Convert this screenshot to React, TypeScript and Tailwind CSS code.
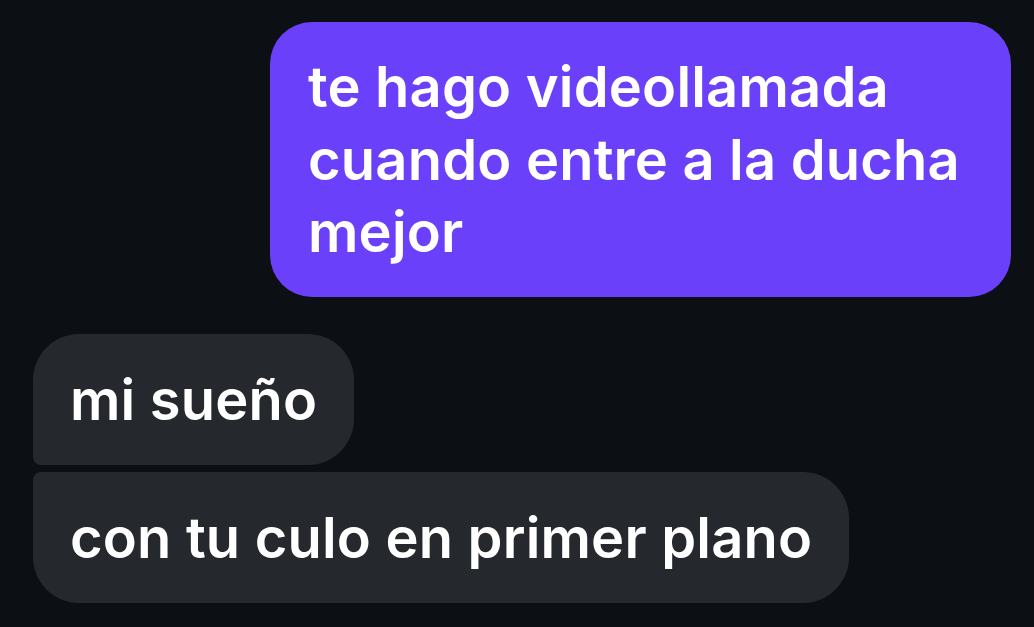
export default function App() {
  return (
    <div
      className="w-[1034px] h-[627px] bg-[#0c1014] overflow-hidden flex flex-col pt-[22px]"
      style={{ fontFamily: "Inter, 'Noto Sans', sans-serif" }}
    >
      <div className="flex justify-end pr-[23px]">
        <div className="w-[741px] h-[275px] bg-[#6b40fa] rounded-[42px] pl-[38px] pt-[29px] text-white text-[56px] leading-[72.5px] font-semibold tracking-[0.2px]">
          te hago videollamada
          <br />
          cuando entre a la ducha
          <br />
          mejor
        </div>
      </div>
      <div className="flex flex-col items-start pl-[33px] mt-[37px] gap-[7px]">
        <div className="h-[131px] flex items-center bg-[#25292d] rounded-[46px] rounded-bl-[8px] px-[37px] text-white text-[56px] font-semibold tracking-[0.2px]">
          mi sueño
        </div>
        <div className="h-[131px] flex items-center bg-[#25292d] rounded-[46px] rounded-tl-[8px] px-[37px] text-white text-[56px] font-semibold tracking-[0.2px]">
          con tu culo en primer plano
        </div>
      </div>
    </div>
  );
}
